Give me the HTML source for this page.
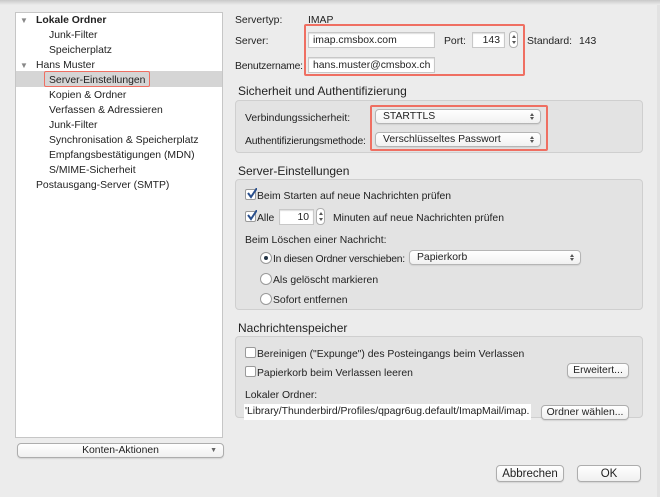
<!DOCTYPE html><html><head><meta charset="utf-8"><style>
*{box-sizing:border-box;margin:0;padding:0}
body{width:660px;height:497px;background:#ececec;font-family:"Liberation Sans",sans-serif;font-size:10.4px;color:#222;position:relative;overflow:hidden}
.t{position:absolute;white-space:nowrap;line-height:13px;transform:translateY(-5px)}
.in{position:absolute;background:#fff;border:1px solid #c8c8c8;box-shadow:inset 0 1px 1px #ddd;padding:0 4px;line-height:15px;overflow:hidden;white-space:nowrap}
.sel{position:absolute;background:linear-gradient(#fff,#f1f1f1);border:1px solid #b5b5b5;border-radius:4px;padding:0 7px;line-height:14px;box-shadow:0 1px 1px rgba(0,0,0,.08)}
.sel:after{content:"";position:absolute;right:6px;top:3px;width:0;height:0;border-left:2px solid transparent;border-right:2px solid transparent;border-bottom:3px solid #555}
.sel:before{content:"";position:absolute;right:6px;bottom:3px;width:0;height:0;border-left:2px solid transparent;border-right:2px solid transparent;border-top:3px solid #555}
.btn{position:absolute;background:linear-gradient(#fff,#f0f0f0);border:1px solid #adadad;border-radius:4px;text-align:center;line-height:14px;box-shadow:0 1px 1px rgba(0,0,0,.1)}
.grp{position:absolute;background:#e3e3e3;border:1px solid #cfcfcf;border-radius:4px}
.h{position:absolute;font-size:12px;white-space:nowrap}
.red{position:absolute;border:2px solid #ef6f62;border-radius:2px}
.cb{position:absolute;width:11px;height:11px;border:1px solid #9a9a9a;border-radius:2px;background:#fff}
.rd{position:absolute;width:12px;height:12px;border:1px solid #9a9a9a;border-radius:50%;background:#fff}
.step{position:absolute;width:9px;height:17px;border:1px solid #b0b0b0;border-radius:4px;background:#fff}
.step:before{content:"";position:absolute;left:2px;top:3px;border-left:2px solid transparent;border-right:2px solid transparent;border-bottom:3px solid #555}
.step:after{content:"";position:absolute;left:2px;bottom:3px;border-left:2px solid transparent;border-right:2px solid transparent;border-top:3px solid #555}
</style></head><body>
<div style="position:absolute;left:0;top:0;width:660px;height:5px;background:linear-gradient(#c8c8c8,#ececec)"></div>
<div style="position:absolute;left:657px;top:5px;width:3px;height:492px;background:#e2e2e2"></div>
<!-- sidebar -->
<div style="position:absolute;left:15px;top:12px;width:208px;height:426px;background:#fff;border:1px solid #c6c6c6"></div>
<div style="position:absolute;left:16px;top:71px;width:206px;height:16px;background:#d5d5d5"></div>
<div class="t" style="left:20px;top:19px;font-size:8px;color:#888">▼</div>
<div class="t" style="left:36px;top:19px;font-weight:bold">Lokale Ordner</div>
<div class="t" style="left:49px;top:34px">Junk-Filter</div>
<div class="t" style="left:49px;top:49px">Speicherplatz</div>
<div class="t" style="left:20px;top:64px;font-size:8px;color:#888">▼</div>
<div class="t" style="left:36px;top:64px">Hans Muster</div>
<div class="red" style="left:44px;top:71px;width:106px;height:16px;border-width:1.5px"></div>
<div class="t" style="left:49px;top:79px">Server-Einstellungen</div>
<div class="t" style="left:49px;top:94px">Kopien &amp; Ordner</div>
<div class="t" style="left:49px;top:109px">Verfassen &amp; Adressieren</div>
<div class="t" style="left:49px;top:124px">Junk-Filter</div>
<div class="t" style="left:49px;top:139px">Synchronisation &amp; Speicherplatz</div>
<div class="t" style="left:49px;top:154px">Empfangsbestätigungen (MDN)</div>
<div class="t" style="left:49px;top:169px">S/MIME-Sicherheit</div>
<div class="t" style="left:36px;top:184px">Postausgang-Server (SMTP)</div>
<div class="btn" style="left:17px;top:443px;width:207px;height:15px">Konten-Aktionen<span style="position:absolute;right:6px;top:0;font-size:7px;color:#666">▼</span></div>
<!-- server -->
<div class="t" style="left:235px;top:19px">Servertyp:</div>
<div class="t" style="left:308px;top:19px">IMAP</div>
<div class="t" style="left:235px;top:40px">Server:</div>
<div class="in" style="left:308px;top:32px;width:127px;height:16px">imap.cmsbox.com</div>
<div class="t" style="left:444px;top:40px">Port:</div>
<div class="in" style="left:472px;top:32px;width:33px;height:16px;text-align:right">143</div>
<div class="step" style="left:509px;top:31px"></div>
<div class="t" style="left:527px;top:40px">Standard:</div>
<div class="t" style="left:579px;top:40px">143</div>
<div class="t" style="left:235px;top:65px;letter-spacing:-0.2px">Benutzername:</div>
<div class="in" style="left:308px;top:57px;width:127px;height:16px">hans.muster@cmsbox.ch</div>
<div class="red" style="left:304px;top:24px;width:221px;height:52px"></div>
<div class="h" style="left:238px;top:84px">Sicherheit und Authentifizierung</div>
<div class="grp" style="left:235px;top:100px;width:408px;height:53px"></div>
<div class="t" style="left:245px;top:117px">Verbindungssicherheit:</div>
<div class="t" style="left:245px;top:140px;letter-spacing:-0.2px">Authentifizierungsmethode:</div>
<div class="sel" style="left:375px;top:109px;width:166px;height:15px;padding-top:1px;line-height:12px">STARTTLS</div>
<div class="sel" style="left:375px;top:132px;width:166px;height:15px;padding-top:1px;line-height:12px">Verschlüsseltes Passwort</div>
<div class="red" style="left:370px;top:105px;width:178px;height:46px"></div>
<!-- server settings -->
<div class="h" style="left:238px;top:164px">Server-Einstellungen</div>
<div class="grp" style="left:235px;top:179px;width:408px;height:131px"></div>
<div class="cb" style="left:245px;top:189px"><svg width="11" height="11" style="position:absolute;left:0;top:-2px"><path d="M2 5 L5 9 L11 0" stroke="#2a4f8c" stroke-width="2" fill="none"/></svg></div>
<div class="t" style="left:257px;top:195px">Beim Starten auf neue Nachrichten prüfen</div>
<div class="cb" style="left:245px;top:211px"><svg width="11" height="11" style="position:absolute;left:0;top:-2px"><path d="M2 5 L5 9 L11 0" stroke="#2a4f8c" stroke-width="2" fill="none"/></svg></div>
<div class="t" style="left:257px;top:217px">Alle</div>
<div class="in" style="left:279px;top:209px;width:35px;height:16px;text-align:right">10</div>
<div class="step" style="left:316px;top:208px"></div>
<div class="t" style="left:333px;top:217px">Minuten auf neue Nachrichten prüfen</div>
<div class="t" style="left:245px;top:239px">Beim Löschen einer Nachricht:</div>
<div class="rd" style="left:260px;top:252px"><div style="position:absolute;left:3px;top:3px;width:4px;height:4px;border-radius:50%;background:#234"></div></div>
<div class="t" style="left:273px;top:258px;letter-spacing:-0.25px">In diesen Ordner verschieben:</div>
<div class="sel" style="left:409px;top:250px;width:172px;height:15px;padding-top:1px;line-height:12px">Papierkorb</div>
<div class="rd" style="left:260px;top:273px"></div>
<div class="t" style="left:273px;top:279px">Als gelöscht markieren</div>
<div class="rd" style="left:260px;top:293px"></div>
<div class="t" style="left:273px;top:299px">Sofort entfernen</div>
<!-- storage -->
<div class="h" style="left:238px;top:321px">Nachrichtenspeicher</div>
<div class="grp" style="left:235px;top:336px;width:408px;height:82px"></div>
<div class="cb" style="left:245px;top:347px"></div>
<div class="t" style="left:257px;top:353px">Bereinigen ("Expunge") des Posteingangs beim Verlassen</div>
<div class="cb" style="left:245px;top:366px"></div>
<div class="t" style="left:257px;top:372px">Papierkorb beim Verlassen leeren</div>
<div class="btn" style="left:567px;top:363px;width:62px;height:15px">Erweitert...</div>
<div class="t" style="left:245px;top:394px">Lokaler Ordner:</div>
<div style="position:absolute;left:244px;top:404px;width:287px;height:16px;background:#fff;line-height:16px;padding-left:1px;overflow:hidden;white-space:nowrap">'Library/Thunderbird/Profiles/qpagr6ug.default/ImapMail/imap.</div>
<div class="btn" style="left:541px;top:405px;width:88px;height:15px">Ordner wählen...</div>
<div class="btn" style="left:496px;top:465px;width:68px;height:17px;font-size:11.5px;line-height:16px">Abbrechen</div>
<div class="btn" style="left:577px;top:465px;width:64px;height:17px;font-size:11.5px;line-height:16px">OK</div>
</body></html>
